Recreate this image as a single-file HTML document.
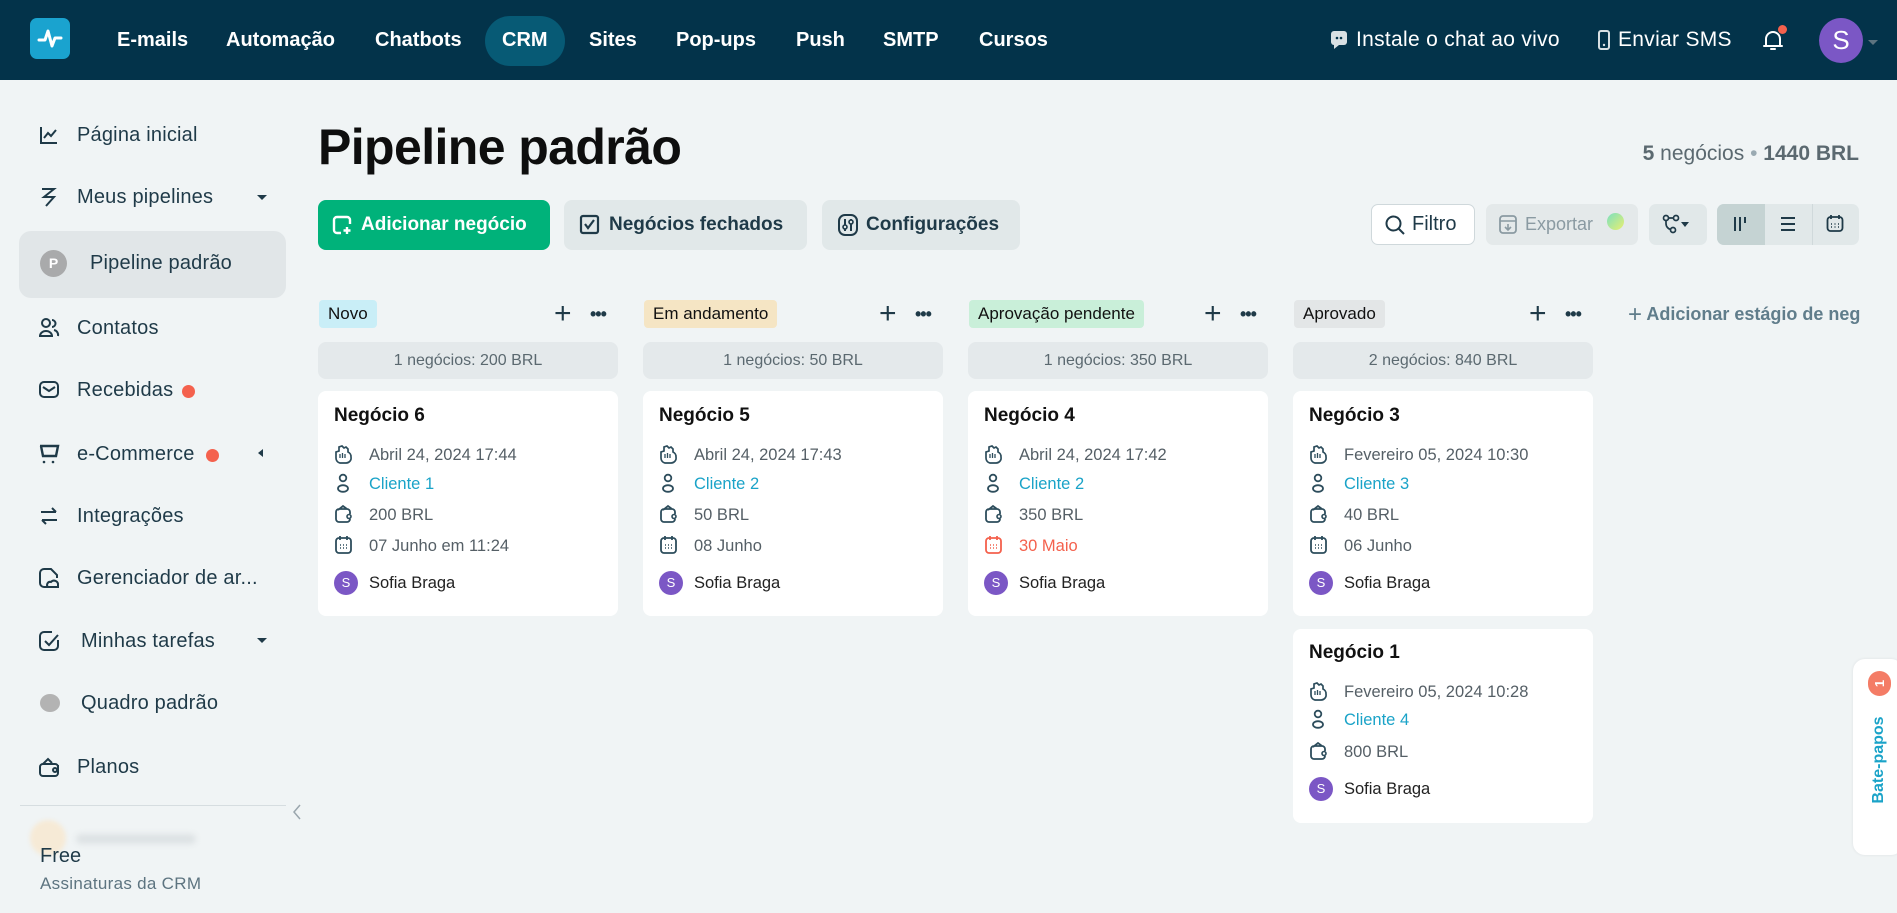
<!DOCTYPE html>
<html><head><meta charset="utf-8"><style>
*{box-sizing:border-box;margin:0;padding:0}
body{width:1897px;height:913px;overflow:hidden;background:#f0f4f5;font-family:"Liberation Sans",sans-serif;color:#1f3a48;position:relative}
.nav{position:absolute;left:0;top:0;width:1897px;height:80px;background:#03334a}
.logo{position:absolute;left:30px;top:18px;width:40px;height:41px;border-radius:7px;background:#1aa3cf}
.ni{position:absolute;top:28px;color:#fff;font-weight:bold;font-size:20px;line-height:24px}
.crm{position:absolute;left:485px;top:16px;width:80px;height:50px;border-radius:25px;background:#075a75}
.nr{position:absolute;top:27px;color:#fff;font-size:21px;line-height:26px;letter-spacing:0.3px}
.side{position:absolute;left:0;top:80px;width:300px;height:833px}
.si{position:absolute;left:77px;font-size:20px;line-height:24px;color:#1f3a48;letter-spacing:0.2px}
.sic{position:absolute;left:38px;width:22px;height:22px}
h1{position:absolute;left:318px;top:117px;font-size:50px;font-weight:bold;color:#0e0e0e;line-height:60px;letter-spacing:-0.6px}
.btn{position:absolute;top:200px;height:50px;border-radius:8px;font-size:19px;font-weight:bold;line-height:50px;color:#1f3a48;background:#e1e8e9}
.tag{position:absolute;top:300px;height:28px;line-height:28px;border-radius:4px;padding:0 9px;font-size:17px;color:#111}
.sum{position:absolute;top:342px;width:300px;height:37px;border-radius:8px;background:#e4e9eb;text-align:center;line-height:37px;font-size:16px;color:#5b6970}
.card{position:absolute;width:300px;background:#fff;border-radius:8px}
.ct{position:absolute;left:16px;font-size:19px;font-weight:bold;color:#111;line-height:24px}
.row{position:absolute;left:16px;height:24px;line-height:24px;font-size:16.5px;color:#555f66;white-space:nowrap;width:270px}
.row svg{position:absolute;left:0;top:1px}
.row span{position:absolute;left:35px}
.lnk{color:#1aa3c8}
.av{position:absolute;left:0;top:0;width:24px;height:24px;border-radius:12px;background:#7b57c5;color:#fff;font-size:13px;text-align:center;line-height:24px}
.plus{position:absolute;top:300px;font-size:30px;line-height:28px;color:#1f3a48;font-weight:300}
.dots{position:absolute;top:300px;font-size:18px;line-height:28px;color:#1f3a48;letter-spacing:-1px;font-weight:bold}
</style></head><body>
<div class="nav">
 <div class="logo"><svg width="40" height="41" viewBox="0 0 40 41"><path d="M9 22h6l3-9 4 15 3-8h6" fill="none" stroke="#fff" stroke-width="3" stroke-linecap="round" stroke-linejoin="round"/></svg></div>
 <div class="ni" style="left:117px">E-mails</div>
 <div class="ni" style="left:226px">Automação</div>
 <div class="ni" style="left:375px">Chatbots</div>
 <div class="crm"></div>
 <div class="ni" style="left:502px">CRM</div>
 <div class="ni" style="left:589px">Sites</div>
 <div class="ni" style="left:676px">Pop-ups</div>
 <div class="ni" style="left:796px">Push</div>
 <div class="ni" style="left:883px">SMTP</div>
 <div class="ni" style="left:979px">Cursos</div>
 <svg style="position:absolute;left:1331px;top:31px" width="17" height="19" viewBox="0 0 17 19"><rect x="0" y="0" width="16" height="14" rx="3" fill="#d8e0e3"/><path d="M3 13v5l5-4" fill="#d8e0e3"/><circle cx="6" cy="7" r="1.3" fill="#03334a"/><circle cx="10" cy="7" r="1.3" fill="#03334a"/></svg>
 <div class="nr" style="left:1356px">Instale o chat ao vivo</div>
 <svg style="position:absolute;left:1598px;top:30px" width="12" height="20" viewBox="0 0 12 20"><rect x="1" y="1" width="10" height="18" rx="2" fill="none" stroke="#d8e0e3" stroke-width="2"/><circle cx="6" cy="15" r="1.2" fill="#d8e0e3"/></svg>
 <div class="nr" style="left:1618px">Enviar SMS</div>
 <svg style="position:absolute;left:1762px;top:28px" width="22" height="24" viewBox="0 0 22 24"><path d="M4 18V11a7 7 0 0 1 14 0v7M2 18h18M9 21h4" fill="none" stroke="#fff" stroke-width="2" stroke-linecap="round"/></svg>
 <div style="position:absolute;left:1778px;top:25px;width:9px;height:9px;border-radius:5px;background:#f4614d"></div>
 <div style="position:absolute;left:1819px;top:18px;width:44px;height:45px;border-radius:50%;background:#7b57c5;color:#fff;font-size:26px;text-align:center;line-height:45px">S</div>
 <div style="position:absolute;left:1868px;top:40px;border:5px solid transparent;border-top-color:#5d7480"></div>
</div>

<div class="side">
 <div style="position:absolute;left:19px;top:151px;width:267px;height:67px;border-radius:12px;background:#e1e6e8"></div>
</div>
<svg class="sic" style="top:124px" viewBox="0 0 22 22"><path d="M3 3v16h16M6 14l4-5 3 3 5-6" fill="none" stroke="#1f3a48" stroke-width="2"/></svg>
<div class="si" style="top:123px">Página inicial</div>
<svg class="sic" style="top:186px" viewBox="0 0 22 22"><path d="M4 3h12L6 11h10L8 20" fill="none" stroke="#1f3a48" stroke-width="2"/></svg>
<div class="si" style="top:185px">Meus pipelines</div>
<div style="position:absolute;left:257px;top:195px;border:5px solid transparent;border-top-color:#1f3a48"></div>
<div style="position:absolute;left:40px;top:250px;width:27px;height:27px;border-radius:50%;background:#a9aaab;color:#fff;font-size:14px;font-weight:bold;text-align:center;line-height:27px">P</div>
<div class="si" style="top:251px;left:90px">Pipeline padrão</div>
<svg class="sic" style="top:317px" viewBox="0 0 22 22"><circle cx="8" cy="6" r="4" fill="none" stroke="#1f3a48" stroke-width="2"/><path d="M2 19a6 5 0 0 1 12 0zM14 3a3 3 0 0 1 0 7M16 13a5 5 0 0 1 4 6" fill="none" stroke="#1f3a48" stroke-width="2"/></svg>
<div class="si" style="top:316px">Contatos</div>
<svg class="sic" style="top:379px" viewBox="0 0 22 22"><rect x="2" y="3" width="18" height="15" rx="4" fill="none" stroke="#1f3a48" stroke-width="2"/><path d="M5 8l6 4 6-4" fill="none" stroke="#1f3a48" stroke-width="2"/></svg>
<div class="si" style="top:378px">Recebidas</div>
<div style="position:absolute;left:182px;top:385px;width:13px;height:13px;border-radius:50%;background:#f4614d"></div>
<svg class="sic" style="top:443px" viewBox="0 0 22 22"><path d="M2 3h18l-2 10H5L3 3" fill="none" stroke="#1f3a48" stroke-width="2.4"/><circle cx="6" cy="19" r="1.3" fill="#1f3a48"/><circle cx="15" cy="19" r="1.3" fill="#1f3a48"/></svg>
<div class="si" style="top:442px">e-Commerce</div>
<div style="position:absolute;left:206px;top:449px;width:13px;height:13px;border-radius:50%;background:#f4614d"></div>
<div style="position:absolute;left:258px;top:449px;border:4px solid transparent;border-right:5px solid #1f3a48;border-left:0"></div>
<svg class="sic" style="top:505px" viewBox="0 0 22 22"><path d="M3 7h15M14 3l4 4M19 15H4M8 19l-4-4" fill="none" stroke="#1f3a48" stroke-width="2"/></svg>
<div class="si" style="top:504px">Integrações</div>
<svg class="sic" style="top:567px" viewBox="0 0 22 22"><path d="M10 20H6a4 4 0 0 1-4-4V6a4 4 0 0 1 4-4h7l6 6v3" fill="none" stroke="#1f3a48" stroke-width="2"/><path d="M10 20a3 3 0 0 1 3-5 4 4 0 0 1 7 3v2z" fill="none" stroke="#1f3a48" stroke-width="2"/></svg>
<div class="si" style="top:566px">Gerenciador de ar...</div>
<svg class="sic" style="top:630px" viewBox="0 0 22 22"><path d="M20 10v6a4 4 0 0 1-4 4H6a4 4 0 0 1-4-4V6a4 4 0 0 1 4-4h8" fill="none" stroke="#1f3a48" stroke-width="2"/><path d="M7 11l4 4 9-10" fill="none" stroke="#1f3a48" stroke-width="2"/></svg>
<div class="si" style="top:629px;left:81px">Minhas tarefas</div>
<div style="position:absolute;left:257px;top:638px;border:5px solid transparent;border-top-color:#1f3a48"></div>
<div style="position:absolute;left:40px;top:694px;width:20px;height:18px;border-radius:50%;background:#b3b3b3"></div>
<div class="si" style="top:691px;left:81px">Quadro padrão</div>
<svg class="sic" style="top:756px" viewBox="0 0 22 22"><path d="M20 9v8a3 3 0 0 1-3 3H5a3 3 0 0 1-3-3v-6a3 3 0 0 1 3-3h12a3 3 0 0 1 3 3M5 8l5-5 4 4" fill="none" stroke="#1f3a48" stroke-width="2"/><circle cx="17" cy="14" r="2" fill="none" stroke="#1f3a48" stroke-width="2"/></svg>
<div class="si" style="top:755px">Planos</div>
<div style="position:absolute;left:20px;top:805px;width:266px;height:1px;background:#d6dde0"></div>
<svg style="position:absolute;left:291px;top:803px" width="12" height="18" viewBox="0 0 12 18"><path d="M9 2L3 9l6 7" fill="none" stroke="#9aa6ad" stroke-width="1.5"/></svg>
<div style="position:absolute;left:30px;top:820px;width:36px;height:36px;border-radius:50%;background:#f6ead6;filter:blur(2px)"></div>
<div style="position:absolute;left:76px;top:834px;width:120px;height:10px;border-radius:5px;background:#dde2e4;filter:blur(3px)"></div>
<div style="position:absolute;left:40px;top:845px;font-size:20px;color:#1f3a48">Free</div>
<div style="position:absolute;left:40px;top:874px;font-size:17px;color:#5d7480;letter-spacing:0.3px">Assinaturas da CRM</div>

<h1>Pipeline padrão</h1>
<div style="position:absolute;right:38px;top:142px;font-size:21px;color:#5b6970"><b>5</b> negócios <span style="color:#9aaab2">•</span> <b>1440 BRL</b></div>

<div class="btn" style="left:318px;width:232px;background:#00b27a;color:#fff;padding-left:43px">Adicionar negócio</div>
<svg style="position:absolute;left:331px;top:214px" width="22" height="22" viewBox="0 0 22 22"><path d="M10 19H6a3 3 0 0 1-3-3V6a3 3 0 0 1 3-3h10a3 3 0 0 1 3 3v4M16 13v7M12.5 16.5h7" fill="none" stroke="#fff" stroke-width="2.4"/></svg>
<div class="btn" style="left:564px;width:243px;padding-left:45px">Negócios fechados</div>
<svg style="position:absolute;left:579px;top:214px" width="21" height="21" viewBox="0 0 21 21"><rect x="2" y="2" width="17" height="17" rx="2" fill="none" stroke="#1f3a48" stroke-width="2.2"/><path d="M6 10l3 4 6-8" fill="none" stroke="#1f3a48" stroke-width="2.2"/></svg>
<div class="btn" style="left:822px;width:198px;padding-left:44px">Configurações</div>
<svg style="position:absolute;left:837px;top:213px" width="22" height="24" viewBox="0 0 22 24"><rect x="2" y="2" width="18" height="20" rx="6" fill="none" stroke="#1f3a48" stroke-width="2"/><path d="M8 6v12M14 6v12" stroke="#1f3a48" stroke-width="2"/><circle cx="8" cy="14" r="2" fill="#e1e8e9" stroke="#1f3a48" stroke-width="1.6"/><circle cx="14" cy="9" r="2" fill="#e1e8e9" stroke="#1f3a48" stroke-width="1.6"/></svg>

<div style="position:absolute;left:1371px;top:204px;width:104px;height:41px;border:1px solid #cfd8db;border-radius:7px;background:#fff;font-size:20px;line-height:39px;padding-left:40px;color:#1f3a48">Filtro</div>
<svg style="position:absolute;left:1384px;top:214px" width="22" height="22" viewBox="0 0 22 22"><circle cx="9.5" cy="9.5" r="7" fill="none" stroke="#1f3a48" stroke-width="2"/><path d="M15 15l5 5" stroke="#1f3a48" stroke-width="2"/></svg>
<div style="position:absolute;left:1486px;top:204px;width:152px;height:41px;border-radius:7px;background:#e4e9ea;font-size:18px;line-height:41px;padding-left:39px;color:#8a9aa2">Exportar</div>
<svg style="position:absolute;left:1499px;top:215px" width="18" height="19" viewBox="0 0 18 19"><rect x="1" y="1" width="16" height="17" rx="3" fill="none" stroke="#8a9aa2" stroke-width="1.8"/><path d="M1 6h16M9 9v6M6 12l3 3 3-3" fill="none" stroke="#8a9aa2" stroke-width="1.6"/></svg>
<div style="position:absolute;left:1607px;top:213px;width:17px;height:17px;border-radius:50%;background:linear-gradient(135deg,#7ce0c0,#e8ef70)"></div>
<div style="position:absolute;left:1649px;top:204px;width:58px;height:41px;border-radius:7px;background:#e1e8e9"></div>
<svg style="position:absolute;left:1662px;top:214px" width="30" height="20" viewBox="0 0 30 20"><circle cx="4" cy="4" r="2.5" fill="none" stroke="#1f3a48" stroke-width="1.7"/><circle cx="14" cy="4" r="2.5" fill="none" stroke="#1f3a48" stroke-width="1.7"/><circle cx="11" cy="16" r="2.5" fill="none" stroke="#1f3a48" stroke-width="1.7"/><path d="M6.5 4h5M4 6.5v3a6 6 0 0 0 5 6" fill="none" stroke="#1f3a48" stroke-width="1.7"/><path d="M19 8h8l-4 5z" fill="#1f3a48"/></svg>
<div style="position:absolute;left:1717px;top:204px;width:142px;height:41px;border-radius:7px;background:#e1e8e9;overflow:hidden"><div style="width:48px;height:41px;background:#c5d3d3"></div><div style="position:absolute;left:95px;top:0;width:1px;height:41px;background:#d0d9db"></div></div>
<svg style="position:absolute;left:1732px;top:215px" width="18" height="18" viewBox="0 0 18 18"><path d="M3 2v14M8 2v14M13 2v6" stroke="#1f3a48" stroke-width="2"/></svg>
<svg style="position:absolute;left:1779px;top:215px" width="18" height="18" viewBox="0 0 18 18"><path d="M2 3h14M2 9h14M2 15h14" stroke="#1f3a48" stroke-width="2"/></svg>
<svg style="position:absolute;left:1826px;top:214px" width="18" height="19" viewBox="0 0 18 19"><rect x="1.5" y="3" width="15" height="14" rx="3" fill="none" stroke="#1f3a48" stroke-width="1.8"/><path d="M5 1v4M13 1v4" stroke="#1f3a48" stroke-width="1.8"/><path d="M5 10h1M8.5 10h1M12 10h1M5 13h1M8.5 13h1M12 13h1" stroke="#1f3a48" stroke-width="1.6"/></svg>

<div class="tag" style="left:319px;background:#c9eef7">Novo</div>
<div class="tag" style="left:644px;background:#f5e5c4">Em andamento</div>
<div class="tag" style="left:969px;background:#c9efd9">Aprovação pendente</div>
<div class="tag" style="left:1294px;background:#e3e6e7">Aprovado</div>
<div class="plus" style="left:554px">+</div><div class="dots" style="left:590px">•••</div>
<div class="plus" style="left:879px">+</div><div class="dots" style="left:915px">•••</div>
<div class="plus" style="left:1204px">+</div><div class="dots" style="left:1240px">•••</div>
<div class="plus" style="left:1529px">+</div><div class="dots" style="left:1565px">•••</div>
<div style="position:absolute;left:1628px;top:300px;line-height:28px;font-size:18px;font-weight:bold;color:#607d8b;white-space:nowrap"><span style="font-size:24px;font-weight:normal;vertical-align:-2px">+</span> Adicionar estágio de neg</div>

<div class="sum" style="left:318px">1 negócios: 200 BRL</div>
<div class="sum" style="left:643px">1 negócios: 50 BRL</div>
<div class="sum" style="left:968px">1 negócios: 350 BRL</div>
<div class="sum" style="left:1293px">2 negócios: 840 BRL</div>

<svg width="0" height="0" style="position:absolute"><defs>
<g id="ih"><path d="M6 19a5 5 0 0 1-4-5V8l3-1V3l3-1 2 2 2-1 2 2v3a5 5 0 0 1 3 5 5 5 0 0 1-5 6z" fill="none" stroke="#2d4d5c" stroke-width="1.7"/><path d="M6 10v4M8.5 9v5M11 10v4" stroke="#2d4d5c" stroke-width="1.3"/></g>
<g id="ip"><circle cx="9" cy="5" r="3.3" fill="none" stroke="#2d4d5c" stroke-width="1.8"/><ellipse cx="9" cy="15.5" rx="5" ry="3.3" fill="none" stroke="#2d4d5c" stroke-width="1.8"/></g>
<g id="iw"><path d="M16 10V8a3 3 0 0 0-3-3H5a3 3 0 0 0-3 3v7a3 3 0 0 0 3 3h8a3 3 0 0 0 3-3M4 6l5-4 4 3" fill="none" stroke="#2d4d5c" stroke-width="1.8"/><circle cx="15" cy="12.5" r="2" fill="none" stroke="#2d4d5c" stroke-width="1.6"/></g>
<g id="ic"><rect x="2" y="3" width="15" height="15" rx="3" fill="none" stroke="currentColor" stroke-width="1.8"/><path d="M6 1v4M13 1v4" stroke="currentColor" stroke-width="1.8"/><path d="M6 10h1M9 10h1M12 10h1M6 13h1M9 13h1M12 13h1" stroke="currentColor" stroke-width="1.6"/></g>
</defs></svg>

<div class="card" style="left:318px;top:391px;height:225px">
 <div class="ct" style="top:13px">Negócio 6</div>
 <div class="row" style="top:52px"><svg width="20" height="22"><use href="#ih"/></svg><span>Abril 24, 2024 17:44</span></div>
 <div class="row" style="top:81px"><svg width="20" height="22"><use href="#ip"/></svg><span class="lnk">Cliente 1</span></div>
 <div class="row" style="top:112px"><svg width="20" height="22"><use href="#iw"/></svg><span>200 BRL</span></div>
 <div class="row" style="top:143px"><svg width="20" height="22" style="color:#2d4d5c"><use href="#ic"/></svg><span>07 Junho em 11:24</span></div>
 <div class="row" style="top:180px"><div class="av">S</div><span style="color:#222">Sofia Braga</span></div>
</div>
<div class="card" style="left:643px;top:391px;height:225px">
 <div class="ct" style="top:13px">Negócio 5</div>
 <div class="row" style="top:52px"><svg width="20" height="22"><use href="#ih"/></svg><span>Abril 24, 2024 17:43</span></div>
 <div class="row" style="top:81px"><svg width="20" height="22"><use href="#ip"/></svg><span class="lnk">Cliente 2</span></div>
 <div class="row" style="top:112px"><svg width="20" height="22"><use href="#iw"/></svg><span>50 BRL</span></div>
 <div class="row" style="top:143px"><svg width="20" height="22" style="color:#2d4d5c"><use href="#ic"/></svg><span>08 Junho</span></div>
 <div class="row" style="top:180px"><div class="av">S</div><span style="color:#222">Sofia Braga</span></div>
</div>
<div class="card" style="left:968px;top:391px;height:225px">
 <div class="ct" style="top:13px">Negócio 4</div>
 <div class="row" style="top:52px"><svg width="20" height="22"><use href="#ih"/></svg><span>Abril 24, 2024 17:42</span></div>
 <div class="row" style="top:81px"><svg width="20" height="22"><use href="#ip"/></svg><span class="lnk">Cliente 2</span></div>
 <div class="row" style="top:112px"><svg width="20" height="22"><use href="#iw"/></svg><span>350 BRL</span></div>
 <div class="row" style="top:143px"><svg width="20" height="22" style="color:#f4614d"><use href="#ic"/></svg><span style="color:#f4614d">30 Maio</span></div>
 <div class="row" style="top:180px"><div class="av">S</div><span style="color:#222">Sofia Braga</span></div>
</div>
<div class="card" style="left:1293px;top:391px;height:225px">
 <div class="ct" style="top:13px">Negócio 3</div>
 <div class="row" style="top:52px"><svg width="20" height="22"><use href="#ih"/></svg><span>Fevereiro 05, 2024 10:30</span></div>
 <div class="row" style="top:81px"><svg width="20" height="22"><use href="#ip"/></svg><span class="lnk">Cliente 3</span></div>
 <div class="row" style="top:112px"><svg width="20" height="22"><use href="#iw"/></svg><span>40 BRL</span></div>
 <div class="row" style="top:143px"><svg width="20" height="22" style="color:#2d4d5c"><use href="#ic"/></svg><span>06 Junho</span></div>
 <div class="row" style="top:180px"><div class="av">S</div><span style="color:#222">Sofia Braga</span></div>
</div>
<div class="card" style="left:1293px;top:629px;height:194px">
 <div class="ct" style="top:12px">Negócio 1</div>
 <div class="row" style="top:51px"><svg width="20" height="22"><use href="#ih"/></svg><span>Fevereiro 05, 2024 10:28</span></div>
 <div class="row" style="top:79px"><svg width="20" height="22"><use href="#ip"/></svg><span class="lnk">Cliente 4</span></div>
 <div class="row" style="top:111px"><svg width="20" height="22"><use href="#iw"/></svg><span>800 BRL</span></div>
 <div class="row" style="top:148px"><div class="av">S</div><span style="color:#222">Sofia Braga</span></div>
</div>

<div style="position:absolute;left:1853px;top:659px;width:50px;height:196px;border-radius:12px;background:#fff;box-shadow:0 0 3px rgba(0,0,0,.08)"></div>
<div style="position:absolute;left:1868px;top:671px;width:23px;height:25px;border-radius:12px;background:#f47c66;color:#fff;font-size:13px;font-weight:bold;text-align:center;line-height:25px"><span style="display:inline-block;transform:rotate(-90deg)">1</span></div>
<div style="position:absolute;left:1829px;top:749px;width:100px;height:22px;transform:rotate(-90deg);transform-origin:center;color:#1aa3c8;font-weight:bold;font-size:16px;text-align:center;line-height:22px">Bate-papos</div>
</body></html>
